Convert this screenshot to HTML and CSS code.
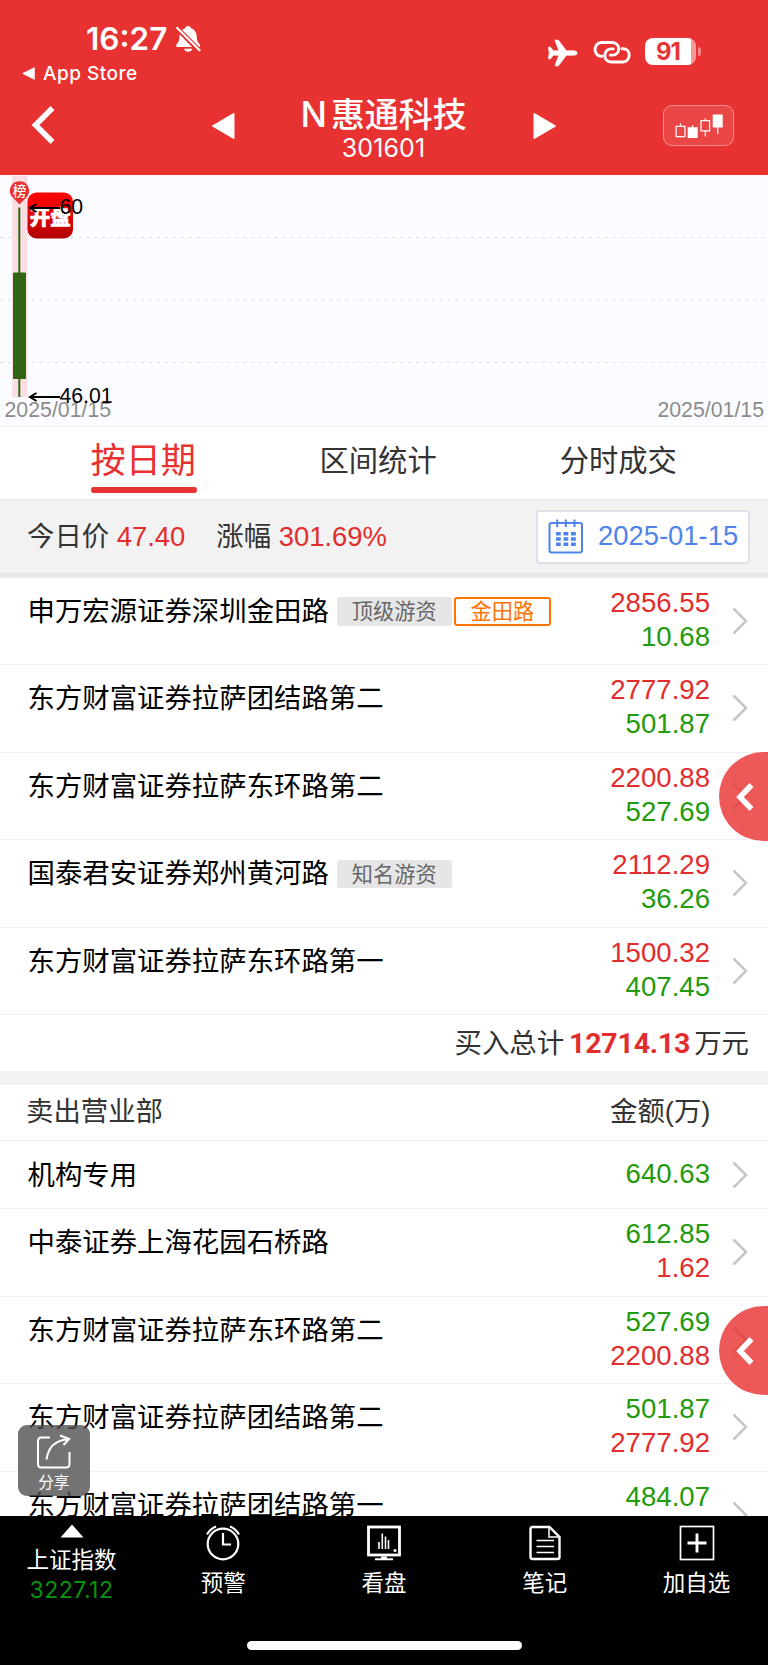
FILE: index.html
```html
<!DOCTYPE html>
<html lang="zh-CN">
<head>
    <meta charset="UTF-8">
    <meta name="viewport" content="width=device-width, initial-scale=1.0">
    <title>惠通科技 301601</title>
    <link rel="stylesheet" href="styles.css">
</head>
<body>
    <svg class="defs" width="0" height="0">
        <symbol id="arrow" viewBox="0 0 16 28">
            <path d="M1.5 1.5L14 14L1.5 26.5" fill="none" stroke="#c6c6c6" stroke-width="2.5"/>
        </symbol>
        <symbol id="open" viewBox="0 0 18 28">
            <path d="M15.5 2L4 14L15.5 26" fill="none" stroke="#fff" stroke-width="5.5"/>
        </symbol>
    </svg>

    <div class="page">
        <header class="header">
            <div class="status-bar">
                <div class="status-left">
                    <div class="clock">
                        <span>16:27</span>
                        <svg width="27" height="28" viewBox="0 0 27 28">
                            <path d="M13 1c1.800 0 2.800 1 3 2.300 3.800 1.300 5.600 4.600 5.800 8.600.2 4 .9 5 2.700 7 .8 1 1 3.100-.6 3.100H2.500c-1.600 0-1.700-2-.8-3.100 1.900-2 2.500-3 2.700-7 .2-4 2-7.300 5.700-8.600C10.300 2 11.300 1 13 1z" fill="#fff"/>
                            <path d="M9 23.800h8.400c-.5 2-2 3-4.200 3s-3.700-1-4.200-3z" fill="#fff"/>
                            <path d="M.5 1.800L26 27.400" stroke="#e83131" stroke-width="5"/>
                            <path d="M1.500 2.200L25.300 26" stroke="#fff" stroke-width="2.100"/>
                        </svg>
                    </div>
                    <div class="back-app">
                        <svg width="13" height="13" viewBox="0 0 13 13"><path d="M0.500 6.500L12.500 0.500V12.500z" fill="#fff" stroke="#fff" stroke-width="0.500" stroke-linejoin="round"/></svg>
                        <span>App Store</span>
                    </div>
                </div>
                <div class="status-right">
                    <svg width="30" height="28" viewBox="0 0 30 28">
                        <path d="M29.200 14c0 1.400-1.700 2.200-3.600 2.200h-7.200L10.600 26.500c-.3.400-.6.500-1.100.500H7.700c-.5 0-.7-.4-.5-.9l3.700-9.900H5.400l-2.700 3.300c-.2.300-.4.400-.8.400H.9c-.4 0-.6-.3-.5-.7L1.300 14 .4 8.800c-.1-.4.1-.7.500-.7h1c.4 0 .6.100.8.400l2.700 3.300h5.500L7.200 1.900C7 1.400 7.200 1 7.700 1h1.800c.5 0 .8.100 1.100.5l7.800 10.300h7.200c1.900 0 3.600.8 3.600 2.200z" fill="#fff" stroke="#fff" stroke-width="0.700"/>
                    </svg>
                    <svg class="link-icon" width="38" height="24" viewBox="0 0 38 24">
                        <g fill="none" stroke="#fff" stroke-width="2.900" stroke-linecap="round">
                            <path d="M9 16.200H8.300C4.600 16.200 2 13 2 9.600S4.600 2.500 8.300 2.500H19c3.700 0 6.700 2.700 6.700 6.300 0 3.700-2.700 6.300-6 6.300h-2.400"/>
                            <path d="M29 8.700h1.200c3.500 0 6 2.800 6 6.400s-2.500 6.900-6.300 6.900H18.500c-3.900 0-6.700-2.700-6.700-6.500 0-3.700 2.700-6.600 6.400-6.600h2"/>
                        </g>
                    </svg>
                    <div class="battery"><span>91</span></div>
                </div>
            </div>
            <div class="nav-bar">
                <svg class="nav-back" width="25" height="38" viewBox="0 0 25 38"><path d="M21.500 2L4.500 19L21.500 36" fill="none" stroke="#fff" stroke-width="5.500"/></svg>
                <svg class="nav-prev" width="24" height="28" viewBox="0 0 24 28"><path d="M1.300 14L23 1.300V26.700z" fill="#fff" stroke="#fff" stroke-linejoin="round"/></svg>
                <div class="stock">
                    <div class="stock-name"><span class="stock-flag">N</span>惠通科技</div>
                    <div class="stock-code">301601</div>
                </div>
                <svg class="nav-next" width="24" height="28" viewBox="0 0 24 28"><path d="M22.700 14L1 1.300V26.700z" fill="#fff" stroke="#fff" stroke-linejoin="round"/></svg>
                <div class="kline-btn">
                    <svg width="48" height="24" viewBox="0 0 48 24">
                        <g fill="none" stroke="#fff" stroke-width="1.200">
                            <path d="M5.500 9.500v3M1.100 12.300h8.800v10.300H1.100zM17.700 11v3M30.300 4.500v2.200M26 6.700h8.600v10.100H26zM30.300 16.800v5.600M42.700 13v7"/>
                        </g>
                        <path d="M12.700 13.300h10V24.300h-10zM37.700 .5h10V13.500h-10z" fill="#fff"/>
                    </svg>
                </div>
            </div>
        </header>

        <svg class="chart" width="768" height="251" viewBox="0 0 768 251">
            <defs>
                <linearGradient id="logoBg" x1="0" y1="0" x2="0" y2="1">
                    <stop offset="0" stop-color="#fe0404"/>
                    <stop offset="0.350" stop-color="#ee0303"/>
                    <stop offset="1" stop-color="#b00202"/>
                </linearGradient>
            </defs>
            <g stroke="#dcdee2" stroke-dasharray="3 4.850">
                <path d="M0 62.500H768M0 125H768M0 187.500H768"/>
            </g>
            <rect x="12" y="1" width="15.500" height="221" fill="#f9dfe4"/>
            <path d="M19.300 32.500V222" stroke="#326414" stroke-width="2"/>
            <rect x="13" y="97.500" width="13" height="106.500" rx="1" fill="#326414"/>
            <!-- 龙虎榜标记 -->
            <path d="M19.500 6.300a9.500 9.500 0 0 1 6 16.900L19.500 29.500L13.500 23.200a9.500 9.500 0 0 1 6-16.900z" fill="#e83131"/>
            <text class="pin-text" x="19.500" y="20.500" text-anchor="middle">榜</text>
            <!-- 水印 -->
            <rect x="27.500" y="17.500" width="45.500" height="46" rx="9" fill="url(#logoBg)"/>
            <text class="logo-text" x="50.200" y="50" text-anchor="middle">开盘</text>
            <g fill="none" stroke="#000" stroke-width="2">
                <path d="M30.500 33H60M36.500 29L30 33L36.500 37"/>
                <path d="M30.500 222H60M36.500 218L30 222L36.500 226"/>
            </g>
            <text class="date-text" x="4.500" y="241.500">2025/01/15</text>
            <text class="date-text" x="764" y="241.500" text-anchor="end">2025/01/15</text>
            <text class="price-text" x="59.500" y="39.200">60</text>
            <text class="price-text" x="59.500" y="228.400">46.01</text>
        </svg>

        <div class="tabs">
            <div class="tab active">按日期</div>
            <div class="tab">区间统计</div>
            <div class="tab">分时成交</div>
        </div>

        <div class="summary">
            <div class="summary-item">今日价 <span class="up">47.40</span></div>
            <div class="summary-item">涨幅 <span class="up">301.69%</span></div>
            <div class="date-picker">
                <svg width="36" height="35" viewBox="0 0 36 35">
                    <g fill="none" stroke="#4f83ea" stroke-width="2">
                        <rect x="1.500" y="4" width="32.500" height="29.500" rx="2"/>
                        <path d="M9.200 0.500V8M17.800 0.500V8M26.500 0.500V8"/>
                    </g>
                    <path d="M8 13h4.800v3.500H8zM15.500 13h4.800v3.500h-4.800zM23 13h4.800v3.500H23zM8 18.200h4.800v3.500H8zM15.500 18.200h4.800v3.500h-4.800zM23 18.200h4.800v3.500H23zM8 23.400h4.800v3.500H8zM15.500 23.400h4.800v3.500h-4.800zM23 23.400h4.800v3.500H23z" fill="#4f83ea"/>
                </svg>
                <span>2025-01-15</span>
            </div>
        </div>

        <div class="list">
            <div class="row">
                <div class="name">申万宏源证券深圳金田路<span class="tag">顶级游资</span><span class="tag tag-hot">金田路</span></div>
                <div class="amount"><div class="up">2856.55</div><div class="down">10.68</div></div>
                <svg class="arrow"><use href="#arrow"/></svg>
            </div>
            <div class="row">
                <div class="name">东方财富证券拉萨团结路第二</div>
                <div class="amount"><div class="up">2777.92</div><div class="down">501.87</div></div>
                <svg class="arrow"><use href="#arrow"/></svg>
            </div>
            <div class="row">
                <div class="name">东方财富证券拉萨东环路第二</div>
                <div class="amount"><div class="up">2200.88</div><div class="down">527.69</div></div>
                <svg class="arrow"><use href="#arrow"/></svg>
            </div>
            <div class="row">
                <div class="name">国泰君安证券郑州黄河路<span class="tag">知名游资</span></div>
                <div class="amount"><div class="up">2112.29</div><div class="down">36.26</div></div>
                <svg class="arrow"><use href="#arrow"/></svg>
            </div>
            <div class="row">
                <div class="name">东方财富证券拉萨东环路第一</div>
                <div class="amount"><div class="up">1500.32</div><div class="down">407.45</div></div>
                <svg class="arrow"><use href="#arrow"/></svg>
            </div>
            <div class="total">买入总计<span class="total-num">12714.13</span>万元</div>
        </div>

        <div class="list sell-list">
            <div class="list-head"><span>卖出营业部</span><span>金额(万)</span></div>
            <div class="row row-single">
                <div class="name">机构专用</div>
                <div class="amount"><div class="down">640.63</div></div>
                <svg class="arrow"><use href="#arrow"/></svg>
            </div>
            <div class="row">
                <div class="name">中泰证券上海花园石桥路</div>
                <div class="amount"><div class="down">612.85</div><div class="up">1.62</div></div>
                <svg class="arrow"><use href="#arrow"/></svg>
            </div>
            <div class="row">
                <div class="name">东方财富证券拉萨东环路第二</div>
                <div class="amount"><div class="down">527.69</div><div class="up">2200.88</div></div>
                <svg class="arrow"><use href="#arrow"/></svg>
            </div>
            <div class="row">
                <div class="name">东方财富证券拉萨团结路第二</div>
                <div class="amount"><div class="down">501.87</div><div class="up">2777.92</div></div>
                <svg class="arrow"><use href="#arrow"/></svg>
            </div>
            <div class="row">
                <div class="name">东方财富证券拉萨团结路第一</div>
                <div class="amount"><div class="down">484.07</div></div>
                <svg class="arrow"><use href="#arrow"/></svg>
            </div>
        </div>

        <div class="side-btn side-buy"><svg width="18" height="28"><use href="#open"/></svg></div>
        <div class="side-btn side-sell"><svg width="18" height="28"><use href="#open"/></svg></div>

        <div class="share-btn">
            <svg width="36" height="36" viewBox="0 0 36 36">
                <g fill="none" stroke="#fff" stroke-width="2">
                    <path d="M14 3.500H5.500Q2 3.500 2 7V30Q2 33.500 5.500 33.500H30Q33.500 33.500 33.500 30V18"/>
                    <path d="M10.500 25.500C12 14.500 18.500 6 33 5.300M24 1.500L33.200 5L27.500 11"/>
                </g>
            </svg>
            <span>分享</span>
        </div>

        <nav class="bottom-bar">
            <div class="index-item">
                <svg width="24" height="14" viewBox="0 0 24 14"><path d="M12 0.500L23.500 13.500H0.500z" fill="#fff"/></svg>
                <div>上证指数</div>
                <div class="index-num">3227.12</div>
            </div>
            <div class="bar-item">
                <svg width="36" height="36" viewBox="0 0 36 36">
                    <g fill="none" stroke="#fff" stroke-width="2.200">
                        <circle cx="18" cy="19" r="15.300"/>
                        <path d="M18 8V19.500H26M2 9.500Q5 4 11 1.500M34 9.500Q31 4 25 1.500"/>
                    </g>
                </svg>
                <div>预警</div>
            </div>
            <div class="bar-item">
                <svg width="36" height="36" viewBox="0 0 36 36">
                    <g fill="none" stroke="#fff">
                        <rect x="2.500" y="2" width="31" height="28" stroke-width="2.800"/>
                        <path d="M9 34.200H27M15 32.500H21" stroke-width="2"/>
                        <path d="M13 17V24M16.300 8.500V24M19.500 11.500V24M22.500 15V24" stroke-width="1.600"/>
                    </g>
                    <circle cx="29" cy="25.500" r="1.600" fill="#fff"/>
                </svg>
                <div>看盘</div>
            </div>
            <div class="bar-item">
                <svg width="36" height="36" viewBox="0 0 36 36">
                    <g fill="none" stroke="#fff" stroke-width="2.400">
                        <path d="M5.500 2H22.500L32.500 12V32Q32.500 34 30.500 34H5.500Q3.500 34 3.500 32V4Q3.500 2 5.500 2z"/>
                        <path d="M22 2.500V12H32" stroke-width="1.500"/>
                        <path d="M9.500 15.500H27M9.500 21.500H27M9.500 27.500H27" stroke-width="1.500"/>
                    </g>
                </svg>
                <div>笔记</div>
            </div>
            <div class="bar-item">
                <svg width="36" height="36" viewBox="0 0 36 36">
                    <rect x="1.500" y="1.500" width="33" height="33" fill="none" stroke="#fff" stroke-width="1.700"/>
                    <path d="M8.500 18H27.500M18 8.500V27.500" stroke="#fff" stroke-width="2.900"/>
                </svg>
                <div>加自选</div>
            </div>
            <div class="home-indicator"></div>
        </nav>
    </div>
</body>
</html>
```
FILE: styles.css
```css
* {
    margin: 0;
    padding: 0;
    box-sizing: border-box;
}

body {
    width: 768px;
    background: #fff;
    font-family: "Liberation Sans", "Noto Sans CJK SC", sans-serif;
    font-size: 27.4px;
    color: #000;
}

svg {
    display: block;
    flex-shrink: 0;
}

.defs {
    position: absolute;
}

.page {
    position: relative;
    height: 1665px;
    overflow: hidden;
    display: flex;
    flex-direction: column;
}

.up {
    color: #e12d2d;
}

.down {
    color: #229a0c;
}

/* 顶部 */
.header {
    height: 174.5px;
    flex-shrink: 0;
    background: #e83131;
    color: #fff;
}

.status-bar {
    height: 92px;
    display: flex;
    justify-content: space-between;
    font-family: Inter, sans-serif;
}

.status-left {
    padding: 21px 0 0 22px;
}

.clock {
    display: flex;
    align-items: center;
    gap: 8px;
    height: 36px;
    padding-left: 64px;
    font-size: 31.5px;
    font-weight: 600;
    line-height: 38px;
}

.back-app {
    display: flex;
    align-items: center;
    gap: 8px;
    height: 33px;
    font-size: 19px;
    font-weight: 500;
    letter-spacing: 0.5px;
}

.status-right {
    display: flex;
    align-items: flex-start;
    padding: 39px 72px 0 0;
}

.link-icon {
    margin: 1px 14px 0 15px;
}

.battery {
    position: relative;
    width: 51px;
    height: 27px;
    margin-top: -1px;
    border-radius: 8px;
    background: linear-gradient(90deg, #fff 46px, #f39797 46px);
    color: #e83131;
    font-size: 24px;
    font-weight: 700;
    line-height: 28px;
    padding-left: 11px;
    letter-spacing: -1px;
}

.battery::after {
    content: "";
    position: absolute;
    right: -5px;
    top: 9px;
    width: 3px;
    height: 9px;
    border-radius: 0 4px 4px 0;
    background: #f18a8a;
}

.nav-bar {
    height: 82px;
    display: flex;
    align-items: flex-start;
    padding: 0 34px 0 31px;
}

.nav-back {
    margin-top: 14px;
}

.nav-prev {
    margin: 20px 0 0 155px;
}

.stock {
    width: 297px;
    text-align: center;
}

.stock-name {
    font-family: Inter, "Noto Sans CJK SC", sans-serif;
    font-size: 33.9px;
    font-weight: 500;
    line-height: 44px;
}

.stock-flag {
    font-size: 35px;
    font-weight: 500;
    margin-right: 4px;
}

.stock-code {
    font-family: Inter, sans-serif;
    font-size: 25px;
    line-height: 26px;
    margin-top: -2px;
    letter-spacing: 0.1px;
}

.nav-next {
    margin: 20px 0 0 1px;
}

.kline-btn {
    display: flex;
    align-items: center;
    justify-content: center;
    width: 71px;
    height: 41px;
    margin: 13px 0 0 auto;
    border: 1px solid rgba(255, 255, 255, 0.4);
    border-radius: 9px;
    background: rgba(255, 255, 255, 0.1);
}

/* K线 */
.chart {
    height: 251px;
    background: #fbfcff;
    font-family: "Liberation Sans", "Noto Sans CJK SC", sans-serif;
}

.pin-text {
    font-size: 13.5px;
    font-weight: 500;
    fill: #fff;
}

.logo-text {
    font-size: 20.5px;
    font-weight: 900;
    fill: #fff;
    stroke: #fff;
    stroke-width: 0.6px;
}

.date-text {
    font-size: 21.3px;
    fill: #8c8c8c;
}

.price-text {
    font-size: 21.2px;
    fill: #000;
}

/* 标签页 */
.tabs {
    display: flex;
    gap: 123px;
    height: 73px;
    flex-shrink: 0;
    padding-left: 90.5px;
    border-top: 1px solid #eff1f3;
    color: #333;
    font-size: 29.3px;
    line-height: 68px;
}

.tab.active {
    position: relative;
    width: 106px;
    white-space: nowrap;
    color: #e83131;
    font-size: 35.2px;
    line-height: 67px;
}

.tab.active::after {
    content: "";
    position: absolute;
    left: 0;
    top: 60.5px;
    width: 106px;
    height: 5.5px;
    border-radius: 3px;
    background: #e83131;
}

/* 价格信息 */
.summary {
    display: flex;
    align-items: center;
    gap: 31px;
    height: 79px;
    flex-shrink: 0;
    padding: 0 18px 4px 27px;
    border-top: 1px solid #ececec;
    border-bottom: 5px solid #e8e8e8;
    background: #f2f2f2;
    color: #333;
}

.date-picker {
    display: flex;
    align-items: center;
    gap: 14px;
    width: 214px;
    height: 54px;
    margin-left: auto;
    margin-top: 5px;
    padding-left: 10px;
    border: 2px solid #dde1ea;
    border-radius: 4px;
    background: #fff;
    color: #4f83ea;
}

.date-picker span {
    white-space: nowrap;
    margin-top: -1px;
}

/* 营业部列表 */
.row {
    display: flex;
    height: 87.5px;
    padding: 0 20px 0 27.5px;
    border-bottom: 1.5px solid #f1f1f1;
    line-height: 34px;
}

.name {
    display: flex;
    align-items: center;
    flex: 1;
    height: 34px;
    margin-top: 17px;
    white-space: nowrap;
}

.tag {
    height: 28.5px;
    margin-left: 8px;
    padding: 0 15px;
    border-radius: 3px;
    background: #e6e6e6;
    color: #666;
    font-size: 21.2px;
    line-height: 29.5px;
}

.tag-hot {
    margin-left: 2px;
    padding: 0 15px;
    border: 2px solid #ff7300;
    background: #fff;
    color: #ff7300;
    line-height: 26px;
}

.amount {
    margin-top: 8px;
    font-size: 27.6px;
    text-align: right;
}

.arrow {
    width: 16px;
    height: 28px;
    margin: 29px 0 0 22px;
}

.row-single {
    height: 68.5px;
}

.row-single .name {
    margin-top: 18px;
}

.row-single .amount {
    margin-top: 16px;
}

.row-single .arrow {
    margin-top: 20px;
}

.total {
    display: flex;
    justify-content: flex-end;
    height: 55.5px;
    padding-right: 19px;
    color: #333;
    line-height: 58px;
}

.total-num {
    margin: 0 4px 0 5px;
    color: #e12d2d;
    font-family: Roboto, sans-serif;
    font-size: 28.5px;
    font-weight: 700;
    letter-spacing: -0.2px;
}

.sell-list {
    border-top: 14px solid #f2f2f2;
}

.list-head {
    display: flex;
    justify-content: space-between;
    height: 56px;
    padding: 0 57.5px 0 26px;
    border-bottom: 1.5px solid #f1f1f1;
    color: #333;
    line-height: 54px;
}

/* 悬浮按钮 */
.side-btn {
    position: absolute;
    right: 0;
    width: 49px;
    height: 89.5px;
    padding: 31px 0 0 17px;
    border-radius: 45px 0 0 45px;
    background: rgba(232, 48, 48, 0.8);
}

.side-buy {
    top: 751.5px;
}

.side-sell {
    top: 1305.5px;
}

.share-btn {
    position: absolute;
    left: 18px;
    top: 1424.5px;
    width: 71.5px;
    height: 71.5px;
    padding-top: 9px;
    border-radius: 9px;
    background: rgba(80, 80, 80, 0.8);
    color: #fff;
    font-size: 15.5px;
    line-height: 25px;
    display: flex;
    flex-direction: column;
    align-items: center;
}

/* 底部导航 */
.bottom-bar {
    position: absolute;
    left: 0;
    bottom: 0;
    width: 768px;
    height: 149px;
    display: grid;
    grid-template-columns: 143px 1fr 1fr 1fr 143px;
    background: #000;
    color: #fff;
    font-size: 22.5px;
    text-align: center;
}

.index-item,
.bar-item {
    display: flex;
    flex-direction: column;
    align-items: center;
}

.index-item {
    padding-top: 8px;
    line-height: 30px;
}

.index-item svg {
    margin-bottom: 8px;
}

.index-num {
    color: #0c930c;
    font-family: Inter, sans-serif;
    font-size: 23px;
    line-height: 28px;
    letter-spacing: 0.5px;
}

.bar-item {
    padding-top: 9px;
    line-height: 30px;
}

.bar-item svg {
    margin-bottom: 8px;
}

.home-indicator {
    position: absolute;
    left: 246.5px;
    bottom: 15px;
    width: 275px;
    height: 9px;
    border-radius: 5px;
    background: #fff;
}
```
